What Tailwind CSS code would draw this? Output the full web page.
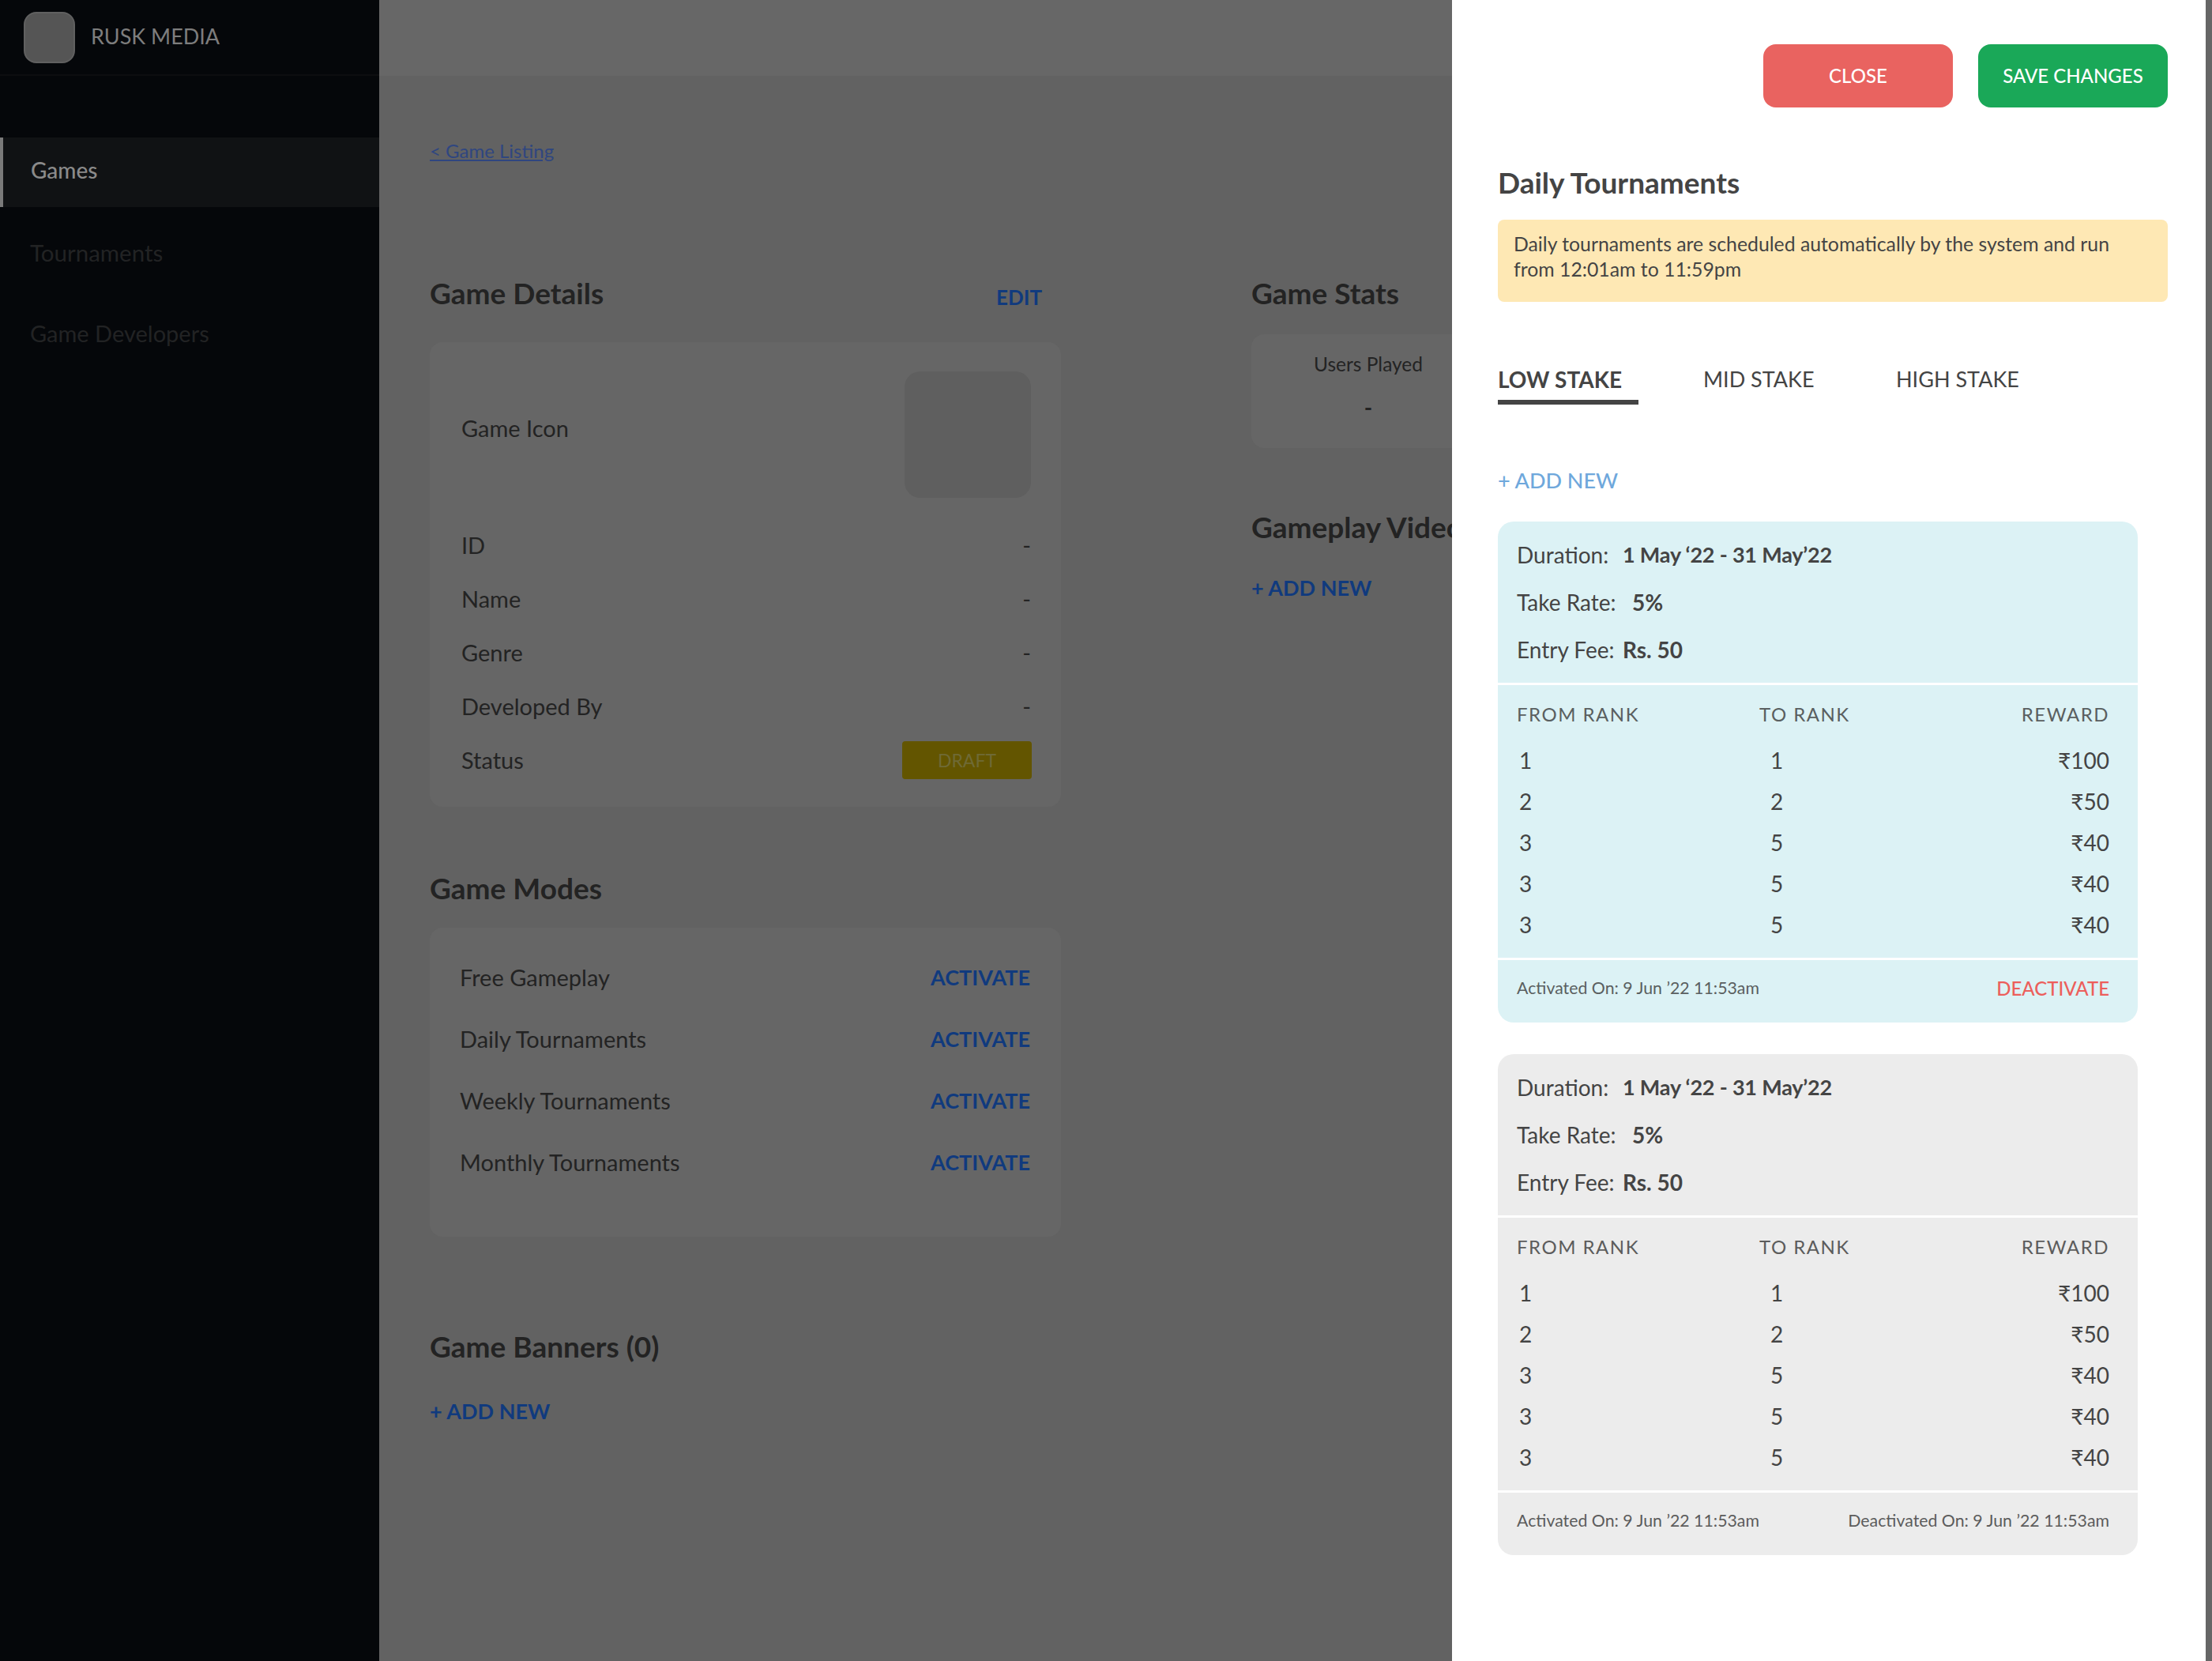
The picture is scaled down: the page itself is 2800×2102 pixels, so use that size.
<!DOCTYPE html>
<html lang="en">
<head>
    <meta charset="UTF-8">
    <title>Rusk Media - Game Details</title>
    <script src="https://cdn.jsdelivr.net/npm/@tailwindcss/browser@4"></script>
</head>
<body class="bg-[#626262] font-['Lato',sans-serif] text-[29px] text-[#232323]">
<div class="relative flex h-[2102px] w-[2800px] overflow-hidden">

    <!-- sidebar -->
    <aside class="w-[480px] shrink-0 bg-[#05070a]">
        <div class="flex h-[96px] items-center gap-[20px] border-b-2 border-[#0d0e10] pl-[30px]">
            <div class="h-[65px] w-[65px] rounded-[16px] border-2 border-[#606060] bg-[#555555]"></div>
            <span class="pb-[2px] text-[27px] text-[#7d7d7d]">RUSK MEDIA</span>
        </div>
        <nav class="mt-[78px]">
            <a class="flex h-[88px] items-center border-l-[4px] border-[#7a7a7a] bg-[#101214] pb-[7px] pl-[35px] text-[28px] font-medium text-[#8a8a8a]">Games</a>
            <a class="mt-[38px] block pl-[38px] text-[29.5px] leading-[40px] text-[#222324]">Tournaments</a>
            <a class="mt-[62px] block pl-[38px] text-[29px] leading-[40px] text-[#222324]">Game Developers</a>
        </nav>
    </aside>

    <!-- main -->
    <main class="flex-1">
        <div class="h-[96px] bg-[#676767]"></div>
        <div class="px-[64px] pt-[80px]">
            <a class="block h-[30px] text-[24px] leading-[30px] text-[#2f4680] underline">&lt; Game Listing</a>

            <div class="mt-[143px] flex gap-[241px]">
                <div class="w-[799px] shrink-0">
                    <div class="flex items-end justify-between pr-[24px]">
                        <h2 class="text-[37px] font-bold leading-[44px]">Game Details</h2>
                        <a class="text-[26px] font-bold leading-[34px] text-[#103a7e]">EDIT</a>
                    </div>
                    <div class="mt-[40px] h-[588px] rounded-[16px] bg-[#666666] pl-[40px] pr-[38px] pt-[37px]">
                        <div class="flex h-[160px] justify-between">
                            <span class="mt-[56px] leading-[32px]">Game Icon</span>
                            <div class="h-[160px] w-[160px] rounded-[20px] bg-[#5f5f5f]"></div>
                        </div>
                        <div class="mt-[42px] flex h-[36px] items-center justify-between"><span>ID</span><span>-</span></div>
                        <div class="mt-[32px] flex h-[36px] items-center justify-between"><span>Name</span><span>-</span></div>
                        <div class="mt-[32px] flex h-[36px] items-center justify-between"><span>Genre</span><span>-</span></div>
                        <div class="mt-[32px] flex h-[36px] items-center justify-between"><span>Developed By</span><span>-</span></div>
                        <div class="mt-[26px] flex h-[48px] items-center justify-between">
                            <span>Status</span>
                            <span class="-mr-[1px] flex h-[48px] w-[164px] items-center justify-center rounded-[4px] bg-[#635500] text-[23px] text-[#6f6a35]">DRAFT</span>
                        </div>
                    </div>

                    <h2 class="mt-[81px] text-[37px] font-bold leading-[44px]">Game Modes</h2>
                    <div class="mt-[28px] h-[391px] rounded-[16px] bg-[#666666] pl-[38px] pr-[39px] pt-[44px]">
                        <div class="flex h-[38px] items-center justify-between"><span>Free Gameplay</span><a class="text-[27px] font-bold text-[#103a7e]">ACTIVATE</a></div>
                        <div class="mt-[40px] flex h-[38px] items-center justify-between"><span>Daily Tournaments</span><a class="text-[27px] font-bold text-[#103a7e]">ACTIVATE</a></div>
                        <div class="mt-[40px] flex h-[38px] items-center justify-between"><span>Weekly Tournaments</span><a class="text-[27px] font-bold text-[#103a7e]">ACTIVATE</a></div>
                        <div class="mt-[40px] flex h-[38px] items-center justify-between"><span>Monthly Tournaments</span><a class="text-[27px] font-bold text-[#103a7e]">ACTIVATE</a></div>
                    </div>

                    <h2 class="mt-[117px] text-[37px] font-bold leading-[44px]">Game Banners (0)</h2>
                    <a class="mt-[42px] block text-[27px] font-bold leading-[36px] text-[#103a7e]">+ ADD NEW</a>
                </div>

                <div class="w-[296px] shrink-0">
                    <h2 class="whitespace-nowrap text-[37px] font-bold leading-[44px]">Game Stats</h2>
                    <div class="mt-[30px] h-[144px] rounded-[16px] bg-[#666666] pt-[22px] text-center">
                        <p class="text-[24.5px] leading-[32px]">Users Played</p>
                        <p class="mt-[20px] text-[28px] font-bold leading-[36px]">-</p>
                    </div>
                    <h2 class="mt-[78px] whitespace-nowrap text-[37px] font-bold leading-[44px]">Gameplay Videos</h2>
                    <a class="mt-[37px] block text-[27px] font-bold leading-[36px] text-[#103a7e]">+ ADD NEW</a>
                </div>
            </div>
        </div>
    </main>

    <!-- drawer -->
    <section class="absolute bottom-0 right-[8px] top-0 w-[954px] bg-white pl-[58px] pr-[48px] pt-[56px] text-[#444444]">
        <div class="flex justify-end gap-[32px]">
            <button class="h-[80px] w-[240px] rounded-[16px] bg-[#e96360] text-[24px] font-medium text-white">CLOSE</button>
            <button class="h-[80px] w-[240px] rounded-[16px] bg-[#1aa858] text-[24px] font-medium text-white">SAVE CHANGES</button>
        </div>
        <h2 class="mt-[71px] text-[37px] font-bold leading-[48px]">Daily Tournaments</h2>
        <div class="mt-[23px] h-[104px] rounded-[8px] bg-[#fee8b4] px-[20px] pt-[15px] text-[24.8px] leading-[32px]">
            Daily tournaments are scheduled automatically by the system and run<br>from 12:01am to 11:59pm
        </div>
        <div class="mt-[78px] flex text-[27px]">
            <div class="w-[178px] border-b-[6px] border-[#444444] pb-[6px] text-[28px] font-bold leading-[40px]">LOW STAKE</div>
            <div class="ml-[82px] w-[244px] leading-[40px]">MID STAKE</div>
            <div class="leading-[40px]">HIGH STAKE</div>
        </div>
        <a class="mt-[78px] block text-[27px] font-medium leading-[36px] text-[#6fa8dc]">+ ADD NEW</a>

        <div class="mt-[34px] h-[634px] w-[810px] rounded-[20px] bg-[#dcf2f5]">
            <div class="h-[207px] border-b-[3px] border-white pl-[24px] pt-[22px] text-[28px]">
                <p class="flex h-[40px] items-center"><span class="w-[134px]">Duration:</span><b class="text-[27px] tracking-[-0.2px]">1 May ‘22 - 31 May’22</b></p>
                <p class="mt-[20px] flex h-[40px] items-center"><span class="w-[146px]">Take Rate:</span><b>5%</b></p>
                <p class="mt-[20px] flex h-[40px] items-center"><span class="w-[134px]">Entry Fee:</span><b>Rs. 50</b></p>
            </div>
            <div class="h-[348px] border-b-[3px] border-white pl-[24px] pr-[36px] pt-[19px]">
                <div class="grid h-[32px] grid-cols-[307px_1fr_auto] items-center text-[24px] tracking-[1.5px] text-[#5a5f60]"><span>FROM RANK</span><span>TO RANK</span><span>REWARD</span></div>
                <div class="mt-[18px] grid grid-cols-[307px_1fr_auto] text-[28px] leading-[52px]"><span class="pl-[3px]">1</span><span class="pl-[14px]">1</span><span>₹100</span></div>
                <div class="grid grid-cols-[307px_1fr_auto] text-[28px] leading-[52px]"><span class="pl-[3px]">2</span><span class="pl-[14px]">2</span><span>₹50</span></div>
                <div class="grid grid-cols-[307px_1fr_auto] text-[28px] leading-[52px]"><span class="pl-[3px]">3</span><span class="pl-[14px]">5</span><span>₹40</span></div>
                <div class="grid grid-cols-[307px_1fr_auto] text-[28px] leading-[52px]"><span class="pl-[3px]">3</span><span class="pl-[14px]">5</span><span>₹40</span></div>
                <div class="grid grid-cols-[307px_1fr_auto] text-[28px] leading-[52px]"><span class="pl-[3px]">3</span><span class="pl-[14px]">5</span><span>₹40</span></div>
            </div>
            <div class="flex h-[79px] items-center justify-between pb-[8px] pl-[24px] pr-[36px]">
                <span class="text-[21.3px] text-[#5a5f60]">Activated On: 9 Jun ’22 11:53am</span>
                <a class="text-[24px] font-medium text-[#ec5f5c]">DEACTIVATE</a>
            </div>
        </div>

        <div class="mt-[40px] h-[634px] w-[810px] rounded-[20px] bg-[#ececec]">
            <div class="h-[207px] border-b-[3px] border-white pl-[24px] pt-[22px] text-[28px]">
                <p class="flex h-[40px] items-center"><span class="w-[134px]">Duration:</span><b class="text-[27px] tracking-[-0.2px]">1 May ‘22 - 31 May’22</b></p>
                <p class="mt-[20px] flex h-[40px] items-center"><span class="w-[146px]">Take Rate:</span><b>5%</b></p>
                <p class="mt-[20px] flex h-[40px] items-center"><span class="w-[134px]">Entry Fee:</span><b>Rs. 50</b></p>
            </div>
            <div class="h-[348px] border-b-[3px] border-white pl-[24px] pr-[36px] pt-[19px]">
                <div class="grid h-[32px] grid-cols-[307px_1fr_auto] items-center text-[24px] tracking-[1.5px] text-[#5c5c5c]"><span>FROM RANK</span><span>TO RANK</span><span>REWARD</span></div>
                <div class="mt-[18px] grid grid-cols-[307px_1fr_auto] text-[28px] leading-[52px]"><span class="pl-[3px]">1</span><span class="pl-[14px]">1</span><span>₹100</span></div>
                <div class="grid grid-cols-[307px_1fr_auto] text-[28px] leading-[52px]"><span class="pl-[3px]">2</span><span class="pl-[14px]">2</span><span>₹50</span></div>
                <div class="grid grid-cols-[307px_1fr_auto] text-[28px] leading-[52px]"><span class="pl-[3px]">3</span><span class="pl-[14px]">5</span><span>₹40</span></div>
                <div class="grid grid-cols-[307px_1fr_auto] text-[28px] leading-[52px]"><span class="pl-[3px]">3</span><span class="pl-[14px]">5</span><span>₹40</span></div>
                <div class="grid grid-cols-[307px_1fr_auto] text-[28px] leading-[52px]"><span class="pl-[3px]">3</span><span class="pl-[14px]">5</span><span>₹40</span></div>
            </div>
            <div class="flex h-[79px] items-center justify-between pb-[8px] pl-[24px] pr-[36px] text-[21.3px] text-[#5c5c5c]">
                <span>Activated On: 9 Jun ’22 11:53am</span>
                <span>Deactivated On: 9 Jun ’22 11:53am</span>
            </div>
        </div>
    </section>
    <div class="absolute bottom-0 right-0 top-0 w-[8px] bg-[#666666]"></div>
</div>
</body>
</html>
